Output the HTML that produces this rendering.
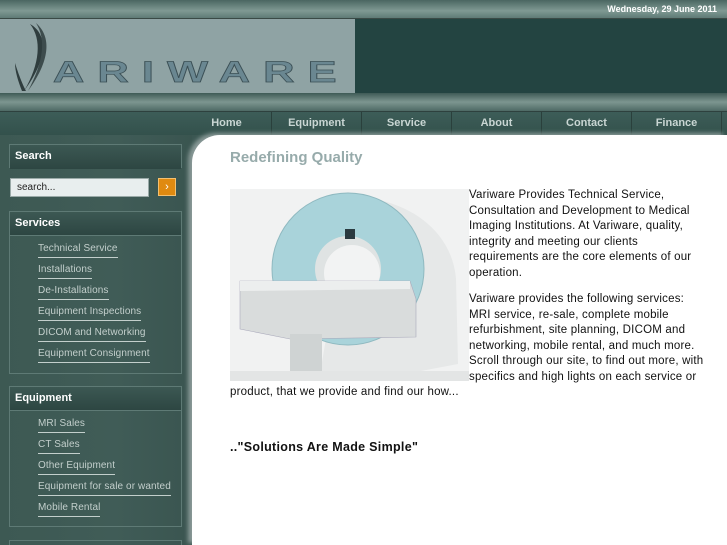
<!DOCTYPE html>
<html><head><meta charset="utf-8"><style>
*{margin:0;padding:0;box-sizing:border-box}
html,body{width:727px;height:545px;overflow:hidden}
body{font-family:"Liberation Sans",sans-serif;background:#3b5752;position:relative}
.abs{position:absolute}
#top{left:0;top:0;width:727px;height:19px;background:linear-gradient(180deg,#4a6661,#7f9993 60%,#5f7b76);border-bottom:1px solid #3a4a46}
#date{right:10px;top:4px;color:#fff;font-size:9px;font-weight:bold}
#logo{left:0;top:19px;width:355px;height:74px;background:#8fa3a4}
#hdr{left:355px;top:19px;width:372px;height:74px;background:#234441}
#band{left:0;top:93px;width:727px;height:19px;background:linear-gradient(180deg,#3f5b56,#7d9690 50%,#4e6a65);border-bottom:1px solid #2e413e}
#nav{left:0;top:112px;width:727px;height:23px;background:linear-gradient(180deg,#3d5d58,#33514c)}
.ni{position:absolute;top:0;height:23px;line-height:23px;color:#c9d6d3;font-size:11px;font-weight:bold;text-align:center;border-left:1px solid #2a403c}
#side{left:0;top:135px;width:192px;height:410px;background:linear-gradient(90deg,#3d5953,#405c57 60%,#3a5550)}
#content{left:192px;top:135px;width:535px;height:410px;background:#fff;border-top-left-radius:28px;box-shadow:-4px -2px 4px #8a9a98}
.box{position:absolute;left:9px;width:173px;border:1px solid #5e7a75}
.bh{height:24px;line-height:22px;padding-left:5px;color:#fff;font-size:11px;font-weight:bold;background:linear-gradient(180deg,#3c5853,#2d4642);border-bottom:1px solid #5e7a75}
.lk{display:block;margin-left:28px;color:#c3cfcc;font-size:10px;letter-spacing:0.1px;height:21px;line-height:17px}
.lk span{border-bottom:1px solid #c3cfcc;padding-bottom:2px;display:inline-block;line-height:13px}
p{font-size:11.5px;letter-spacing:0.2px;line-height:15.6px;color:#111;white-space:nowrap}
</style></head><body>
<div id="top" class="abs"><div id="date" class="abs">Wednesday, 29 June 2011</div></div>
<div id="logo" class="abs">
<svg width="355" height="74" viewBox="0 0 355 74">
<path d="M30 5 C48 15 48 40 24 72 C40 45 42 20 30 5Z" fill="#2f3d3e"/>
<path d="M36 4 C52 18 50 42 28 72 C44 42 46 20 36 4Z" fill="#3d4c4d"/>
<path d="M15 44 C20 60 24 68 26 72 L22 72 C18 62 15 52 15 44Z" fill="#2f3d3e"/>
<g transform="scale(1.45,1)"><text x="36.5" y="63" font-family="Liberation Sans" font-size="30" font-weight="bold" letter-spacing="9" fill="#6a8791" stroke="#3b4f55" stroke-width="0.7">ARIWARE</text></g>
</svg></div>
<div id="hdr" class="abs"></div>
<div id="band" class="abs"></div>
<div id="nav" class="abs">
<div class="ni" style="left:182px;width:89px;border-left:none">Home</div>
<div class="ni" style="left:271px;width:90px">Equipment</div>
<div class="ni" style="left:361px;width:90px">Service</div>
<div class="ni" style="left:451px;width:90px">About</div>
<div class="ni" style="left:541px;width:90px">Contact</div>
<div class="ni" style="left:631px;width:90px">Finance</div>
<div class="ni" style="left:721px;width:10px"></div>
</div>
<div id="side" class="abs">
<div class="box" style="top:9px;height:24px"><div class="bh" style="border:none">Search</div></div>
<div class="abs" style="left:10px;top:43px;width:139px;height:19px;background:#e8eeee;border:1px solid #9aaaa8;font-size:10px;line-height:17px;padding-left:6px;color:#222">search...</div>
<div class="abs" style="left:158px;top:43px;width:18px;height:18px;background:#e08a10;border:1px solid #f4c070;color:#fff;font-size:11px;text-align:center;line-height:16px">›</div>
<div class="box" style="top:76px;height:163px"><div class="bh">Services</div>
<div style="padding-top:4px">
<a class="lk"><span>Technical Service</span></a><a class="lk"><span>Installations</span></a><a class="lk"><span>De-Installations</span></a><a class="lk"><span>Equipment Inspections</span></a><a class="lk"><span>DICOM and Networking</span></a><a class="lk"><span>Equipment Consignment</span></a>
</div></div>
<div class="box" style="top:251px;height:141px"><div class="bh">Equipment</div>
<div style="padding-top:4px">
<a class="lk"><span>MRI Sales</span></a><a class="lk"><span>CT Sales</span></a><a class="lk"><span>Other Equipment</span></a><a class="lk"><span>Equipment for sale or wanted</span></a><a class="lk"><span>Mobile Rental</span></a>
</div></div>
<div class="box" style="top:405px;height:20px"></div>
</div>
<div id="content" class="abs">
<div class="abs" style="left:38px;top:14px;font-size:15px;font-weight:bold;color:#97abab">Redefining Quality</div>
<svg class="abs" style="left:38px;top:54px" width="239" height="192" viewBox="0 0 239 192">
<rect width="239" height="192" fill="#f1f2f2"/>
<path d="M120 8 C175 8 222 40 226 90 L228 175 L175 185 L90 185 Z" fill="#e6e8e8"/>
<circle cx="118" cy="80" r="76" fill="#a9d3da" stroke="#8fb9c0"/>
<circle cx="118" cy="80" r="33" fill="#dfe3e3"/>
<circle cx="122" cy="84" r="28" fill="#f2f3f3"/>
<rect x="115" y="40" width="10" height="10" fill="#2a3a40"/>
<path d="M10 92 L180 92 L186 110 L186 148 L60 150 L10 140 Z" fill="#d9dcdc" stroke="#aab" stroke-width="0.6"/>
<path d="M10 92 L180 92 L180 100 L10 102 Z" fill="#eceeee"/>
<rect x="60" y="145" width="32" height="45" fill="#cfd3d3"/>
<rect x="0" y="182" width="239" height="10" fill="#e3e5e5"/>
</svg>
<div class="abs" style="left:277px;top:53px"><p>Variware Provides Technical Service,<br>Consultation and Development to Medical<br>Imaging Institutions. At Variware, quality,<br>integrity and meeting our clients<br>requirements are the core elements of our<br>operation.</p></div>
<div class="abs" style="left:277px;top:157px"><p>Variware provides the following services:<br>MRI service, re-sale, complete mobile<br>refurbishment, site planning, DICOM and<br>networking, mobile rental, and much more.<br>Scroll through our site, to find out more, with<br>specifics and high lights on each service or</p></div>
<div class="abs" style="left:38px;top:250px"><p>product, that we provide and find our how...</p></div>
<div class="abs" style="left:38px;top:305px;font-size:12.5px;font-weight:bold;color:#111;letter-spacing:0.3px">.."Solutions Are Made Simple"</div>
</div>
</body></html>
